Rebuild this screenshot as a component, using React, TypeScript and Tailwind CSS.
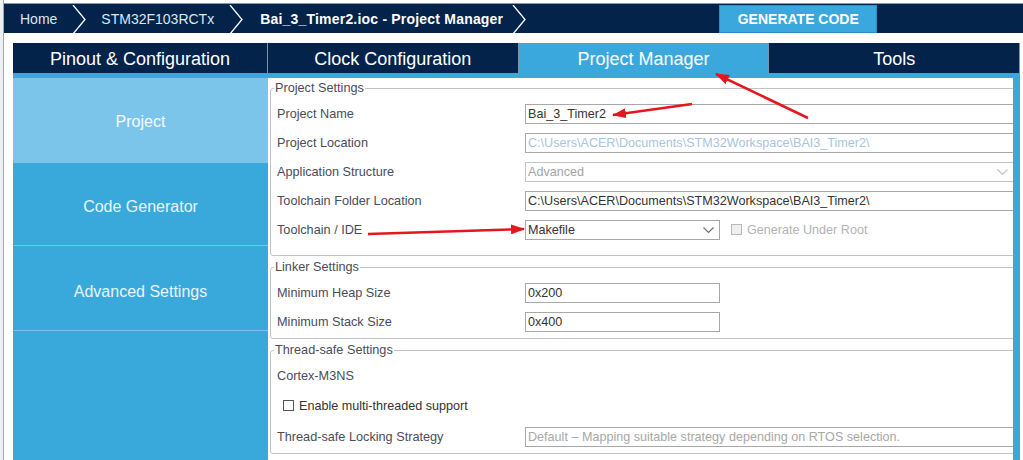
import React from 'react'

function Crumb() {
  return (
    <svg width="14" height="29" viewBox="0 0 14 29" className="shrink-0">
      <polyline points="1,0 13,14.5 1,29" fill="none" stroke="#ffffff" strokeWidth="1.3" />
    </svg>
  )
}

function Caret({ color = '#6f6f6f' }: { color?: string }) {
  return (
    <svg width="11" height="7" viewBox="0 0 11 7" className="shrink-0">
      <polyline points="0.5,0.5 5.5,5.5 10.5,0.5" fill="none" stroke={color} strokeWidth="1.2" />
    </svg>
  )
}

function Group({ title, className = '', children }: { title: string; className?: string; children: React.ReactNode }) {
  return (
    <fieldset className={`ml-[2px] -mr-[6px] rounded-[3px] border border-[#c0c4c8] p-0 ${className}`}>
      <legend className="ml-[3px] px-[1px] text-[12.7px] leading-[14px] text-[#4b4b5a]">{title}</legend>
      {children}
    </fieldset>
  )
}

function Row({ label, h = 'h-[29px]', children }: { label: string; h?: string; children?: React.ReactNode }) {
  return (
    <div className={`flex items-center ${h}`}>
      <span className="w-[248px] shrink-0 pt-[2px] text-[12.7px] text-[#4b4b5a]">{label}</span>
      {children}
    </div>
  )
}

function Field({ value, tone = 'text-[#333333]', w = 'flex-1' }: { value: string; tone?: string; w?: string }) {
  return (
    <div className={`flex h-[20px] items-center border border-[#a8a8a8] bg-white pl-[2px] pt-px text-[12.6px] ${tone} ${w}`}>
      <span className="truncate">{value}</span>
    </div>
  )
}

function Arrows() {
  return (
    <svg width="1023" height="460" viewBox="0 0 1023 460" className="pointer-events-none absolute left-0 top-0">
      <defs>
        <marker id="head" viewBox="0 0 14 10" refX="13" refY="5" markerWidth="14" markerHeight="10" markerUnits="userSpaceOnUse" orient="auto">
          <path d="M0,0 L14,5 L0,10 z" fill="#e5161e" />
        </marker>
      </defs>
      <line x1="808" y1="118" x2="716" y2="74" stroke="#e5161e" strokeWidth="2.5" markerEnd="url(#head)" />
      <line x1="692" y1="104" x2="613" y2="115" stroke="#e5161e" strokeWidth="2.5" markerEnd="url(#head)" />
      <line x1="368" y1="234" x2="524" y2="229" stroke="#e5161e" strokeWidth="2.5" markerEnd="url(#head)" />
    </svg>
  )
}

export default function App() {
  const tabs = ['Pinout & Configuration', 'Clock Configuration', 'Project Manager', 'Tools']
  return (
    <div className="relative flex h-[460px] w-[1023px] overflow-hidden bg-white font-['Liberation_Sans',Arial,sans-serif]">
      <div className="w-[3px] shrink-0 bg-[#eef0f2]" />
      <div className="w-px shrink-0 bg-[#a3a7ab]" />

      <div className="flex min-w-0 flex-1 flex-col">
        {/* breadcrumb bar */}
        <div className="mt-[3px] flex h-[30px] items-center border-t border-[#8b98a8] bg-[#03234b] pl-4 pt-px text-[14px] text-white">
          <span className="text-[#dfe6ee]">Home</span>
          <span className="mx-[15px] flex"><Crumb /></span>
          <span className="text-[#dfe6ee]">STM32F103RCTx</span>
          <span className="ml-[15px] mr-[17px] flex"><Crumb /></span>
          <span className="font-bold tracking-[0.2px]">Bai_3_Timer2.ioc - Project Manager</span>
          <span className="ml-[9px] flex"><Crumb /></span>
          <div className="ml-[193px] flex h-[28px] w-[158px] items-center justify-center border border-[#2c8fc4] bg-[#3aa8dc] text-[14px] font-bold text-white">
            GENERATE CODE
          </div>
        </div>

        {/* main tabs */}
        <div className="ml-[9px] mt-[10px] grid h-[30px] w-[1007px] grid-cols-[254px_1fr_1fr_1fr] gap-px bg-[#7f93ab] pr-px">
          {tabs.map((t) => (
            <div
              key={t}
              className={`flex items-center justify-center pt-[3px] text-[18px] text-white ${
                t === 'Project Manager' ? 'bg-[#3aa8dc]' : 'bg-[#03234b]'
              }`}
            >
              {t}
            </div>
          ))}
        </div>

        {/* body */}
        <div className="ml-[9px] flex min-h-0 w-[1007px] flex-1 bg-[#39a8db] pr-[7px] pt-[5px]">
          <div className="flex w-[255px] shrink-0 flex-col text-[16px] text-[#eaf5fb]">
            <div className="flex h-[85px] items-center justify-center bg-[#7cc5ea] pt-[3px] text-[#f4fafd]">Project</div>
            <div className="flex h-[82px] items-center justify-center pt-[5px]">Code Generator</div>
            <div className="flex h-[85px] items-center justify-center border-t border-[#79c3e8] pt-[7px]">Advanced Settings</div>
            <div className="flex-1 border-t border-[#79c3e8]" />
          </div>

          <div className="min-w-0 flex-1 overflow-hidden bg-white">
            <Group title="Project Settings" className="mt-[3px]">
              <div className="pb-[11px] pl-[6px] pt-[4px]">
                <Row label="Project Name">
                  <Field value="Bai_3_Timer2" />
                </Row>
                <Row label="Project Location">
                  <Field value="C:\Users\ACER\Documents\STM32Workspace\BAI3_Timer2\" tone="text-[#a9c4de]" />
                </Row>
                <Row label="Application Structure">
                  <div className="flex h-[20px] flex-1 items-center justify-between border border-[#c4c4c4] pl-[2px] pr-[9px] pt-px text-[12.6px] text-[#a3a3a3]">
                    <span>Advanced</span>
                    <Caret color="#c2c2c2" />
                  </div>
                </Row>
                <Row label="Toolchain Folder Location">
                  <Field value="C:\Users\ACER\Documents\STM32Workspace\BAI3_Timer2\" />
                </Row>
                <Row label="Toolchain / IDE">
                  <div className="flex h-[20px] w-[195px] items-center justify-between border border-[#a8a8a8] pl-[2px] pr-[5px] pt-px text-[12.6px] text-[#333333]">
                    <span>Makefile</span>
                    <Caret />
                  </div>
                  <div className="ml-[11px] h-[11px] w-[11px] border border-[#b9b9b9] bg-[#efefef]" />
                  <span className="ml-[5px] pt-px text-[12.6px] text-[#b3b3b3]">Generate Under Root</span>
                </Row>
              </div>
            </Group>

            <Group title="Linker Settings" className="mt-[4px]">
              <div className="pb-[2px] pl-[6px] pt-[4px]">
                <Row label="Minimum Heap Size">
                  <Field value="0x200" w="w-[195px]" />
                </Row>
                <Row label="Minimum Stack Size">
                  <Field value="0x400" w="w-[195px]" />
                </Row>
              </div>
            </Group>

            <Group title="Thread-safe Settings" className="mt-[4px]">
              <div className="pl-[6px] pt-[4px]">
                <Row label="Cortex-M3NS" />
                <div className="flex h-[31px] items-center pl-[6px]">
                  <div className="h-[11px] w-[11px] border border-[#555555] bg-white" />
                  <span className="ml-[5px] pt-px text-[12.6px] text-[#333333]">Enable multi-threaded support</span>
                </div>
                <Row label="Thread-safe Locking Strategy" h="h-[32px]">
                  <Field value="Default – Mapping suitable strategy depending on RTOS selection." tone="text-[#a8a8a8]" />
                </Row>
              </div>
            </Group>
          </div>
        </div>
      </div>

      <Arrows />
    </div>
  )
}
